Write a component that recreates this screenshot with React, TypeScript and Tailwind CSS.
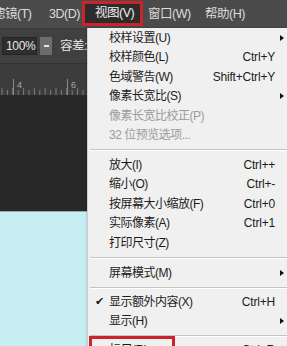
import React from "react";

type Item =
  | { sep: number }
  | { t: string; sc?: string; arrow?: boolean; dis?: boolean; check?: boolean };

const items: Item[] = [
  { t: "校样设置(U)", arrow: true },
  { t: "校样颜色(L)", sc: "Ctrl+Y" },
  { t: "色域警告(W)", sc: "Shift+Ctrl+Y" },
  { t: "像素长宽比(S)", arrow: true },
  { t: "像素长宽比校正(P)", dis: true },
  { t: "32 位预览选项...", dis: true },
  { sep: 10 },
  { t: "放大(I)", sc: "Ctrl++" },
  { t: "缩小(O)", sc: "Ctrl+-" },
  { t: "按屏幕大小缩放(F)", sc: "Ctrl+0" },
  { t: "实际像素(A)", sc: "Ctrl+1" },
  { t: "打印尺寸(Z)" },
  { sep: 11 },
  { t: "屏幕模式(M)", arrow: true },
  { sep: 9 },
  { t: "显示额外内容(X)", sc: "Ctrl+H", check: true },
  { t: "显示(H)", arrow: true },
  { sep: 9 },
  { t: "标尺(R)", sc: "Ctrl+R", check: true },
];

const font = { fontFamily: '"Liberation Sans", "Noto Sans CJK SC", sans-serif' };

function Ruler() {
  const ticks = [];
  for (let i = 0; i < 18; i++) {
    const x = 2 + i * 5.4;
    const long = i % 2 === 0;
    ticks.push(
      <line key={i} x1={x} x2={x} y1={long ? 10 : 12} y2={17} stroke="#7c7c7c" strokeWidth={1} />
    );
  }
  return (
    <svg width="87" height="17" viewBox="0 0 87 17" className="block">
      {ticks}
      <line x1={13.5} x2={13.5} y1={1} y2={17} stroke="#8a8a8a" strokeWidth={1} />
      <line x1={67.5} x2={67.5} y1={1} y2={17} stroke="#8a8a8a" strokeWidth={1} />
      <text x={17} y={10} fontSize={9} fill="#a8a8a8" fontFamily="Liberation Sans, sans-serif">4</text>
      <text x={71} y={10} fontSize={9} fill="#a8a8a8" fontFamily="Liberation Sans, sans-serif">6</text>
    </svg>
  );
}

export default function App() {
  return (
    <div className="relative w-[287px] h-[346px] overflow-hidden bg-[#2a2a2a]" style={font}>
      {/* menu bar */}
      <div className="h-[28px] bg-[#4b4b4b] flex items-center text-[12.5px] tracking-[-0.5px] text-[#dcdcdc] whitespace-nowrap">
        <span className="ml-[-7px] w-[41px] shrink-0">滤镜(T)</span>
        <span className="ml-[15px] w-[30px] shrink-0">3D(D)</span>
        <span className="ml-[3px] w-[61px] shrink-0 h-[25px] mt-[-1px] border-[3px] border-[#c9232b] bg-[#2c2c2c] text-[#f0f0f0] flex items-center pl-[10px]">
          视图(V)
        </span>
        <span className="ml-[5px] w-[43px] shrink-0">窗口(W)</span>
        <span className="ml-[14px] shrink-0">帮助(H)</span>
      </div>
      {/* options bar */}
      <div className="h-[35px] bg-[#404040] border-t border-[#3a3a3a] flex items-center text-[12px] text-[#e6e6e6]">
        <div className="ml-[2px] w-[35px] shrink-0 h-[18px] bg-[#2e2e2e] border border-[#262626] flex items-center pl-[3px] text-[12px] tracking-[-0.3px]">
          100%
        </div>
        <div className="ml-[3px] w-[12px] shrink-0 h-[18px] bg-[#6c6c6c] flex items-center justify-center">
          <div className="w-[5px] h-[2px] bg-[#e8e8e8]" />
        </div>
        <span className="ml-[8px] tracking-[-0.5px] text-[12.5px] whitespace-nowrap">容差:</span>
      </div>
      {/* ruler band */}
      <div className="h-[32px] bg-[#3c3c3c] border-t border-[#333333] flex flex-col justify-end">
        <Ruler />
      </div>
      {/* canvas */}
      <div className="h-[116px] bg-[#282828]" />
      <div className="h-[135px] bg-[#c7eef3] border-t border-[#9aa8aa]" />

      {/* dropdown menu */}
      <div className="absolute left-[87px] top-[28px] right-0 h-[340px] bg-[#f0f0f0] border-l border-[#cfcfcf] shadow-[0_0_2px_rgba(0,0,0,0.3)] flex flex-col text-[12px] text-[#1c1c1c] whitespace-nowrap">
        {items.map((it, i) =>
          "sep" in it ? (
            <div key={i} className="flex flex-col justify-center pl-[2px] shrink-0" style={{ height: it.sep }}>
              <div className="h-px bg-[#c4c4c4]" />
              <div className="h-px bg-[#ffffff]" />
            </div>
          ) : (
            <div key={i} className="relative flex items-center h-[19.5px] shrink-0">
              <div className="w-[21px] pl-[7px] text-[11px] leading-none">{it.check ? "✔" : ""}</div>
              <span className={`tracking-[-0.5px] ${it.dis ? "text-[#9b9b9b]" : ""}`}>{it.t}</span>
              <div className="flex-1" />
              {it.sc ? <span className="tracking-[-0.2px]">{it.sc}</span> : null}
              <div className="w-[12px] h-full flex items-center pl-[5px]">
                {it.arrow ? (
                  <div className="w-0 h-0 border-y-[3.5px] border-y-transparent border-l-[4px] border-l-[#111111]" />
                ) : null}
              </div>
            </div>
          )
        )}
      </div>
      {/* annotation box around last item */}
      <div className="absolute left-[89px] top-[336px] w-[86px] h-[20px] border-[3px] border-[#c9232b]" />
    </div>
  );
}
